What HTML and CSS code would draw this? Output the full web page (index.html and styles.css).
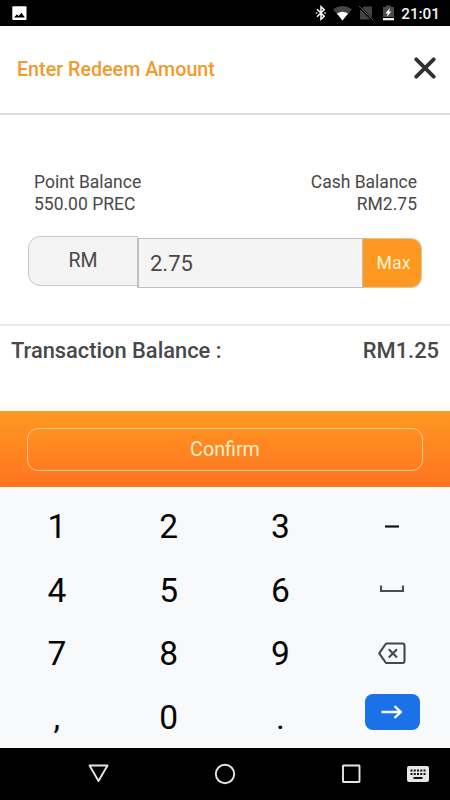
FILE: index.html
```html
<!DOCTYPE html>
<html lang="en">
<head>
<meta charset="utf-8">
<meta name="viewport" content="width=device-width, initial-scale=1">
<title>Enter Redeem Amount</title>
<link rel="stylesheet" href="styles.css">
</head>
<body>
<div class="statusbar">
  <svg class="picture" width="15" height="15" viewBox="0 0 15 15"><rect x=".3" y=".2" width="14.2" height="13.8" rx="1" fill="#fff"/><path d="M2 11.5 5 8.2l1.7 1.7 2.8-3.2 3.3 4.8z" fill="#000"/></svg>
  <div class="status-right">
    <svg width="12" height="16" viewBox="0 0 12 16"><path d="M2 4.3 9.2 11.200 6 14.300V1.700L9.200 4.800 2 11.700" fill="none" stroke="#fff" stroke-width="1.5"/><path d="M.8 7.200h1.600v1.600H.8zM9.300 7.200h1.600v1.600H9.300z" fill="#ddd"/></svg>
    <svg width="19" height="15" viewBox="0 0 19 15"><path d="M0 3.2Q9.5-3.2 19 3.2L9.5 14.8z" fill="#454545"/><path d="M4 7.500Q9.5 4 15 7.500L9.5 14.500z" fill="#fff"/></svg>
    <svg width="15" height="15" viewBox="0 0 15 15"><path d="M5 .5h8v13H1V4.8z" fill="#434343"/><path d="m.2.7 13.7 13.7" stroke="#000" stroke-width="2.2"/><path d="M.2.2 14 14" stroke="#5a5a5a" stroke-width="1"/></svg>
    <svg width="11" height="16" viewBox="0 0 11 16"><path d="M0 2h3V.5h5V2h3v10H0z" fill="#4b4b4b"/><path d="M0 13h11v2.3H0z" fill="#eee"/><path d="M6.7 3 2.5 8.4h2.2L4 12l4.3-5.5H6.1z" fill="#fff"/></svg>
    <span class="clock">21:01</span>
  </div>
</div>
<header class="header">
  <h1>Enter Redeem Amount</h1>
  <svg width="22" height="22" viewBox="0 0 22 22"><path d="m2.300 2.300 17.400 17.400m0-17.400L2.300 19.700" stroke="#303030" stroke-width="3.800" stroke-linecap="round"/></svg>
</header>
<main class="form">
  <div class="balances">
    <div><div>Point Balance</div><div>550.00 PREC</div></div>
    <div class="right"><div>Cash Balance</div><div>RM2.75</div></div>
  </div>
  <div class="amount">
    <div class="currency">RM</div>
    <div class="value">2.75</div>
    <div class="max">Max</div>
  </div>
</main>
<section class="transaction"><span>Transaction Balance :</span><span>RM1.25</span></section>
<div class="action"><div class="confirm">Confirm</div></div>
<div class="keypad">
  <div>1</div><div>2</div><div>3</div>
  <div><svg width="28" height="24" viewBox="0 0 28 24"><path d="M7 11.500h14" stroke="#111" stroke-width="2.200"/></svg></div>
  <div>4</div><div>5</div><div>6</div>
  <div><svg width="28" height="24" viewBox="0 0 28 24"><path d="M3 7.500v5.500h22V7.500" fill="none" stroke="#4b4d50" stroke-width="2.100"/></svg></div>
  <div>7</div><div>8</div><div>9</div>
  <div><svg width="28" height="24" viewBox="0 0 28 24"><path d="M8 1.500h16.500q2 0 2 2v15.500q0 2-2 2H8L1.200 11.300zM10.800 7.200l8.200 8.200m0-8.200-8.200 8.200" fill="none" stroke="#45474a" stroke-width="2.100" stroke-linejoin="round"/></svg></div>
  <div>,</div><div>0</div><div>.</div>
  <div><span class="enter"><svg width="22" height="16" viewBox="0 0 22 16"><path d="M.5 8h19M13.500 2.200 19.800 8l-6.300 5.800" fill="none" stroke="#fff" stroke-width="2.300"/></svg></span></div>
</div>
<nav class="navbar">
  <svg width="22" height="20" viewBox="0 0 22 20"><path d="M1.500 1.500h18L10.500 17z" fill="none" stroke="#e6e6e6" stroke-width="1.900" stroke-linejoin="round"/></svg>
  <svg class="home" width="22" height="22" viewBox="0 0 22 22"><circle cx="11" cy="11" r="9.200" fill="none" stroke="#e6e6e6" stroke-width="1.900"/></svg>
  <svg class="recent" width="20" height="20" viewBox="0 0 20 20"><rect x="1" y="1.500" width="16.500" height="16.500" rx=".5" fill="none" stroke="#e6e6e6" stroke-width="1.900"/></svg>
  <svg class="keys" width="22" height="16" viewBox="0 0 22 16"><rect width="22" height="16" rx="2" fill="#e6e6e6"/><path d="M3.500 4.500h15M3.500 8h15" stroke="#111" stroke-width="2" stroke-dasharray="2 1.250"/><path d="M6.500 12h9" stroke="#111" stroke-width="2"/></svg>
</nav>
</body>
</html>
```
FILE: styles.css
```css
* { box-sizing: border-box; }
body {
  margin: 0;
  width: 450px;
  height: 800px;
  display: flex;
  flex-direction: column;
  overflow: hidden;
  background: #fff;
  color: #484848;
  font-family: Roboto, sans-serif;
}
svg { display: block; flex: none; }
.statusbar {
  height: 26px;
  padding: 0 10px 0 12px;
  display: flex;
  align-items: center;
  justify-content: space-between;
  background: #000;
}
.status-right { display: flex; align-items: center; }
.status-right svg:nth-child(1) { margin-right: 6px; }
.status-right svg:nth-child(2) { margin-right: 7px; }
.status-right svg:nth-child(3) { margin-right: 9px; }
.status-right svg:nth-child(4) { margin-right: 7px; }
.clock { color: #f4f4f4; font-size: 15.3px; font-weight: 500; line-height: 26px; padding-top: 1px; }
.header {
  height: 89px;
  padding: 0 14px 2px 17px;
  display: flex;
  align-items: center;
  justify-content: space-between;
  border-bottom: 2px solid #dcdcdc;
}
.header svg { margin-top: -2px; }
h1 { margin: 0; padding-top: 2px; color: #f19a2d; font-size: 19.7px; font-weight: 500; line-height: 24px; }
.form { height: 209px; padding: 56px 28px 0; }
.balances { display: flex; justify-content: space-between; padding: 0 5px 0 6px; font-size: 17.5px; line-height: 22px; }
.right { text-align: right; }
.amount { display: flex; align-items: flex-start; margin-top: 21px; }
.currency {
  width: 110px;
  height: 50px;
  margin-right: -1px;
  border: 1px solid #c8c8c8;
  border-radius: 12px 0 0 12px;
  background: #f4f4f4;
  font-size: 19.5px;
  line-height: 48px;
  text-align: center;
}
.value {
  flex: 1;
  height: 50px;
  margin-top: 2px;
  padding-left: 11px;
  border: 1px solid #c0c0c0;
  border-left-width: 2px;
  background: #f4f4f4;
  font-size: 22px;
  line-height: 50px;
}
.max {
  width: 59px;
  height: 50px;
  margin-top: 2px;
  padding-left: 3px;
  border: 1px solid #dfc49f;
  border-left: 0;
  border-radius: 0 11px 11px 0;
  background: #ff9820;
  color: #fff4cf;
  font-size: 17.7px;
  line-height: 49px;
  text-align: center;
}
.transaction {
  height: 87px;
  padding: 12px 11px 0;
  display: flex;
  justify-content: space-between;
  border-top: 2px solid #e9e9e9;
  font-size: 21.85px;
  font-weight: 500;
  line-height: 26px;
}
.action { height: 76px; padding: 17px 27px 0; background: linear-gradient(#ff9820, #ff7420); }
.confirm {
  height: 43px;
  border: 1.5px solid #ffc892;
  border-radius: 11px;
  color: #fff0cb;
  font-size: 19.7px;
  line-height: 41px;
  text-align: center;
}
.keypad {
  height: 261px;
  padding: 8px 2px 0 1px;
  display: grid;
  grid-template: repeat(4, 63.5px) / repeat(4, 1fr);
  background: #f8f9fb;
  color: #050505;
  font-size: 33.5px;
}
.keypad > div { display: flex; align-items: center; justify-content: center; }
.enter {
  width: 55px;
  height: 36px;
  margin-bottom: 10px;
  display: flex;
  align-items: center;
  justify-content: center;
  border-radius: 8px;
  background: #1b72e8;
}
.navbar { height: 52px; padding: 0 21px 0 88px; display: flex; align-items: center; background: #000; }
.home { margin-left: 104px; }
.recent { margin-left: 106px; }
.keys { margin-left: auto; }
```
